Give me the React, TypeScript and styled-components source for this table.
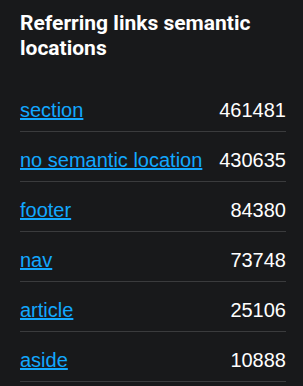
import styled, { createGlobalStyle } from "styled-components";

const GlobalStyle = createGlobalStyle`
  body {
    margin: 0;
    background: #18191b;
  }
`;

const Panel = styled.section`
  padding: 11px 17px 0 20px;
  background: #18191b;
  color: #ffffff;
  min-height: 386px;
  box-sizing: border-box;
`;

const Heading = styled.h2`
  margin: 0 0 21px;
  font-family: Roboto, "Liberation Sans", sans-serif;
  font-weight: 700;
  font-size: 21px;
  line-height: 25px;
  color: #ffffff;
`;

const List = styled.ul`
  list-style: none;
  margin: 0;
  padding: 0;
`;

const Row = styled.li`
  display: flex;
  justify-content: space-between;
  align-items: baseline;
  padding: 18px 0 11px;
  border-bottom: 1px solid #3a3b3d;
  font-family: "Liberation Sans", Arial, sans-serif;
  font-size: 20px;
  line-height: 20px;
`;

const Location = styled.a`
  color: #12a8ff;
  text-decoration: underline;
`;

const Count = styled.span`
  color: #ffffff;
`;

const locations = [
  { name: "section", count: 461481 },
  { name: "no semantic location", count: 430635 },
  { name: "footer", count: 84380 },
  { name: "nav", count: 73748 },
  { name: "article", count: 25106 },
  { name: "aside", count: 10888 },
];

function App() {
  return (
    <>
      <GlobalStyle />
      <Panel>
        <Heading>Referring links semantic locations</Heading>
        <List>
          {locations.map((loc) => (
            <Row key={loc.name}>
              <Location href="#">{loc.name}</Location>
              <Count>{loc.count}</Count>
            </Row>
          ))}
        </List>
      </Panel>
    </>
  );
}

export default App;
